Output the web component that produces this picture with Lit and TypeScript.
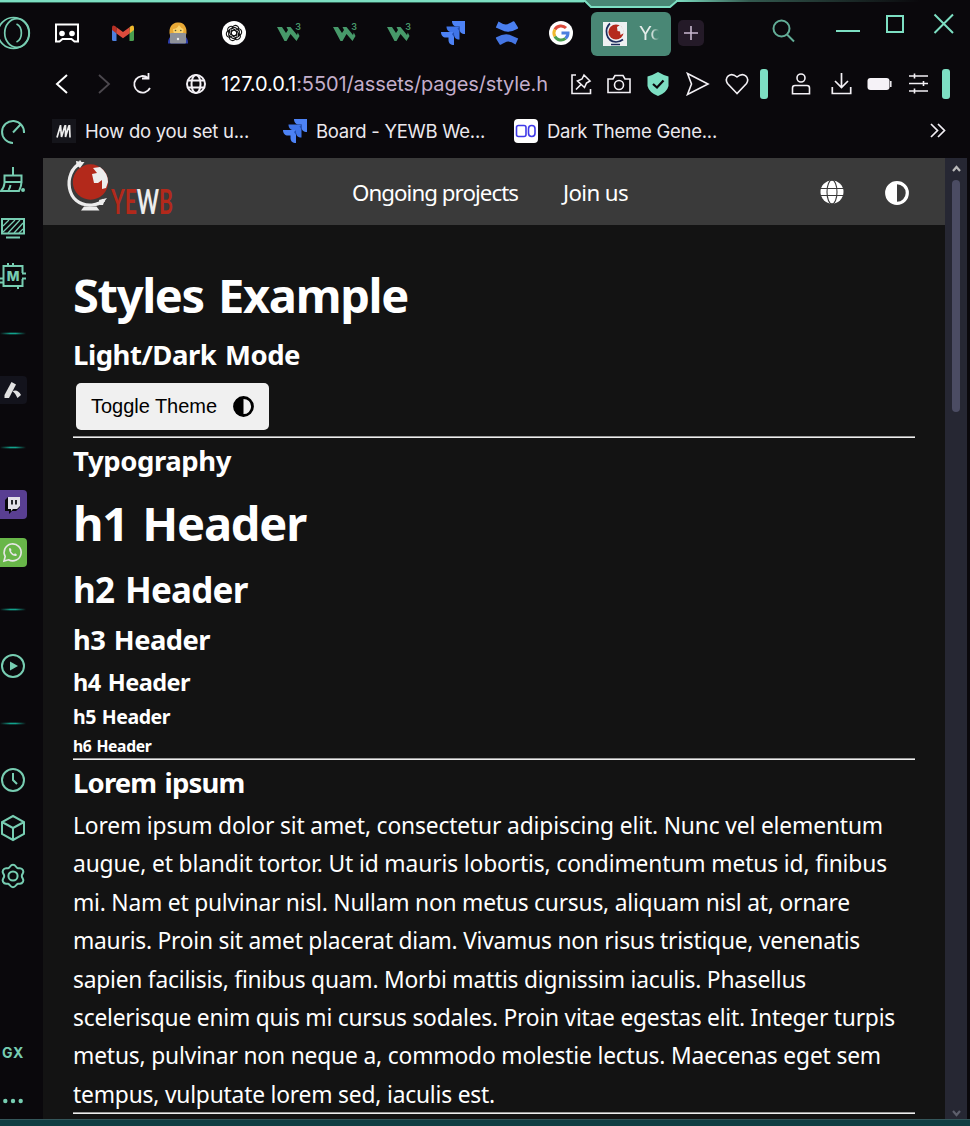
import { LitElement, html, svg, css } from "lit";
import { customElement, property } from "lit/decorators.js";

/* A single line of text whose tracking is adjusted to fill a set measure. */
@customElement("fit-line")
class FitLine extends LitElement {
  @property({ type: Number }) measure = 0;
  static styles = css`
    :host { display: block; white-space: pre; }
    .t { display: inline-block; }
  `;
  async firstUpdated() {
    this.fit();
    await document.fonts.ready;
    this.fit();
  }
  fit() {
    const t = this.renderRoot.querySelector(".t") as HTMLElement;
    t.style.letterSpacing = "0px";
    const n = (this.textContent || "").length;
    if (n && this.measure) {
      t.style.letterSpacing = (this.measure - t.getBoundingClientRect().width) / n + "px";
    }
  }
  render() {
    return html`<span class="t"><slot></slot></span>`;
  }
}

const jira = svg`
  <path d="M11 0H24V13C20.5 13 18.5 11 18.5 8V5.5H16C13 5.5 11 3.500 11 0Z" fill="#4d82f5"/>
  <path d="M5.500 5.500H18.500V18.500C15 18.500 13 16.500 13 13.500V11H10.500C7.500 11 5.500 9 5.500 5.500Z" fill="#3f74e8"/>
  <path d="M0 11H13V24C9.500 24 7.500 22 7.500 19V16.500H5C2 16.500 0 14.500 0 11Z" fill="#4d82f5"/>
  <path d="M13 11v5l-2-3zM18.500 5.500v5l-2-3z" fill="#2450b4"/>`;

const w3 = svg`
  <path d="M0 6H5L9 12L11 9L9.500 6H13.500L20 14L20.800 11.500L22.500 15L19.500 20L13.500 13L9.500 20H7.500Z" fill="#47996a"/>
  <text x="18.300" y="9" font-size="9" font-weight="600" font-family="Inter, sans-serif" fill="#47996a">3</text>`;

const half = (c: string) => svg`
  <circle cx="12" cy="12" r="10.300" fill="none" stroke=${c} stroke-width="3.200"/>
  <path d="M12 1A11 11 0 0 0 12 23Z" fill=${c}/>`;

const I = (w: number, h: number, body: unknown, vb = `0 0 ${w} ${h}`) =>
  html`<svg width=${w} height=${h} viewBox=${vb} fill="none">${body}</svg>`;

const tabs = [
  I(26, 22, svg`<path d="M2 2.500H24V19.500H20.500L17.500 17H8.500L5.500 19.500H2Z" stroke="#fff" stroke-width="2"/><circle cx="8" cy="11.500" r="2.800" fill="#fff"/><circle cx="18" cy="11.500" r="2.800" fill="#fff"/>`),
  I(24, 24, svg`<path d="M1 6.500L5.500 9.500V20H2.500Q1 20 1 18.500Z" fill="#4d80e0"/><path d="M23 6.500L18.500 9.500V20H21.500Q23 20 23 18.500Z" fill="#4a9e50"/><path d="M18.500 6.200L20 5Q23 3.600 23 7V9L18.500 12.400Z" fill="#efb92e"/><path d="M5.500 6.200L4 5Q1 3.600 1 7V9L5.500 12.400Z" fill="#b83025"/><path d="M5.500 6.200L12 11L18.500 6.200V12.400L12 17.200L5.500 12.400Z" fill="#dc4b3c"/>`),
  I(22, 24, svg`<path d="M1 22.500Q1 16 5 15H17Q21 16 21 22.500Z" fill="#2e3fae"/><path d="M3 14Q1.500 9 4 5Q7 1 11 1.500Q16 1 18 5Q20.500 9 19 14Q17 15 11 15Q5 15 3 14Z" fill="#e9a936"/><path d="M6 8Q10 8 12 4Q14 7.500 16.500 8Q17 14 11 14.500Q6 14 6 8Z" fill="#fbd36c"/><circle cx="8.500" cy="9.500" r=".8" fill="#553"/><circle cx="13.800" cy="9.500" r=".8" fill="#553"/><rect x="3" y="12" width="16" height="10.500" rx="1" fill="#8e9199"/><circle cx="11" cy="18" r="1.200" fill="#eee"/>`),
  I(24, 24, svg`<circle cx="12" cy="12" r="12" fill="#fff"/><g stroke="#111" stroke-width="1.100">${[0, 60, 120, 180, 240, 300].map((a) => svg`<path transform="rotate(${a} 12 12)" d="M12 8.900L14.800 10.500V15.200M10 6.500Q12.500 2.900 15.800 5.400Q17 6.500 16.700 8.600L12.800 6.300L9.200 8.300"/>`)}</g>`),
  I(24, 24, w3), I(24, 24, w3), I(24, 24, w3),
  I(24, 24, jira),
  I(24, 24, svg`<path d="M3.500 0.500Q10 5 14 2.500Q17 1 18.200 0.300Q19 0 19.500 .8L23 6.500Q23.400 7.300 22.600 7.700Q15 12 9.500 10.300L.8 6.600Z" fill="#4a7ff0"/><path d="M20.500 23.500Q14 19 10 21.500Q7 23 5.800 23.700Q5 24 4.500 23.200L1 17.500Q.6 16.700 1.400 16.300Q9 12 14.500 13.700L23.200 17.400Z" fill="#4576e4"/>`),
  I(24, 24, svg`<circle cx="12" cy="12" r="12" fill="#fff"/><g stroke-width="3"><path d="M17 7A7 7 0 0 0 5.900 8.500" stroke="#dc4b3c"/><path d="M5.900 8.500A7 7 0 0 0 5.900 15.500" stroke="#efb92e"/><path d="M5.900 15.500A7 7 0 0 0 16.500 17.400" stroke="#4a9e50"/><path d="M16.500 17.400A7 7 0 0 0 19 12H12.500" stroke="#4d80e0"/></g>`),
];

const globeLine = svg`<g stroke="#f3f0f5" stroke-width="2"><circle cx="11" cy="11" r="9"/><ellipse cx="11" cy="11" rx="4.500" ry="9"/><path d="M3 7.500H19M3 14.500H19"/></g>`;
const P = (d: string, w = 24, h = 24, sw = 1.8, c = "#f3f0f5") => I(w, h, svg`<path d=${d} stroke=${c} stroke-width=${sw}/>`);

const G = "#77cdb2";
const S = (body: unknown) => I(26, 28, svg`<g stroke=${G} stroke-width="2">${body}</g>`);

const side = {
  speed: S(svg`<path d="M13 25A11 11 0 1 1 24 15M13 14.500L20.500 6.500"/>`),
  broom: S(svg`<path d="M13 1V9M4.500 16V9.500H21.500V16M3.500 16H22.500M4.500 17Q4 22 1 25H19Q21.500 20 21.500 16M8.500 24Q10 22 10.500 19"/><circle cx="23" cy="24" r="1" fill=${G}/>`),
  screen: S(svg`<rect x="2" y="5" width="22" height="14.500"/><path d="M6 23.500H20"/><path d="M3 12L9 6M3 18L15 6M8 19L20 6M14 19L23 9M19 19L23 15" stroke-width="1.300"/>`),
  chip: S(svg`<path d="M8 1V4M13 1V4M0 16.500H3M0 20.500H3M18 24V27"/><path d="M22.500 11V4H3.500V24H22.500V17M22 11.500H26M22 16.500H26"/><text x="13" y="19" text-anchor="middle" font-family="Inter, sans-serif" font-size="13.500" font-weight="800" fill=${G} stroke="none">M</text>`),
  play: S(svg`<circle cx="13" cy="14" r="11"/><path d="M10 9.500V18.500L18 14Z" fill=${G} stroke="none"/>`),
  clock: S(svg`<circle cx="13" cy="14" r="11"/><path d="M13 7V14L17 18"/>`),
  cube: S(svg`<path d="M13 2L24 8V20L13 26L2 20V8ZM2 8L13 14L24 8M13 14V26"/>`),
  gear: S(svg`<circle cx="13" cy="14" r="4.600"/><path d="M13 2.800C16 2.800 15.500 5.500 18 6.300C20.300 6.300 21.500 5.300 23 8.200C24.500 11 21.800 11.500 21.800 14C21.800 16.500 24.500 17 23 19.800C21.500 22.700 20.300 21.700 18 21.700C15.500 22.500 16 25.200 13 25.200C10 25.200 10.500 22.500 8 21.700C5.700 21.700 4.500 22.700 3 19.800C1.500 17 4.200 16.500 4.200 14C4.200 11.500 1.500 11 3 8.200C4.500 5.300 5.700 6.300 8 6.300C10.500 5.500 10 2.800 13 2.800Z"/>`),
  dots: I(26, 28, svg`<g fill=${G}><circle cx="5.300" cy="15" r="2.200"/><circle cx="13" cy="15" r="2.200"/><circle cx="20.700" cy="15" r="2.200"/></g>`),
};

const lines: [string, number][] = [
  ["Lorem ipsum dolor sit amet, consectetur adipiscing elit. Nunc vel elementum", 810],
  ["augue, et blandit tortor. Ut id mauris lobortis, condimentum metus id, finibus", 814],
  ["mi. Nam et pulvinar nisl. Nullam non metus cursus, aliquam nisl at, ornare", 777],
  ["mauris. Proin sit amet placerat diam. Vivamus non risus tristique, venenatis", 787],
  ["sapien facilisis, finibus quam. Morbi mattis dignissim iaculis. Phasellus", 733],
  ["scelerisque enim quis mi cursus sodales. Proin vitae egestas elit. Integer turpis", 822],
  ["metus, pulvinar non neque a, commodo molestie lectus. Maecenas eget sem", 808],
  ["tempus, vulputate lorem sed, iaculis est.", 422],
];

@customElement("app-root")
class AppRoot extends LitElement {
  static styles = css`
    :host { display: block; }
    * { box-sizing: border-box; margin: 0; }
    svg { display: block; flex: none; }
    .win { width: 970px; height: 1126px; overflow: hidden; background: #0a080c; display: grid;
      grid-template: 1119px 7px / 43px 927px; font-family: Inter, sans-serif; position: relative; }
    .edge { position: absolute; left: 0; top: 0; }
    .bottom { grid-column: 1 / 3; background: #103d42; border-top: 1px solid #34565a; }
    .side { display: flex; flex-direction: column; width: 26px; overflow: visible; }
    .opera { height: 108px; padding-top: 16px; }
    .cell { height: 48px; display: flex; align-items: center; justify-content: center; flex: none; }
    .sep { height: 66px; padding-top: 32px; flex: none; }
    .sep i { display: block; width: 26px; height: 3px; background: linear-gradient(90deg, #0a080c, transparent 40%, transparent 60%, #0a080c), linear-gradient(#0a080c, #12a18c 50%, #0a080c); }
    .grow { flex: 1; }
    .gx { color: #77cdb2; font: 700 14px/48px Inter, sans-serif; letter-spacing: .8px; padding-top: 1px; }
    .last { height: 43px; align-items: flex-start; padding-top: 10px; }
    .main { display: flex; flex-direction: column; }
    .tabs { height: 66px; display: grid; align-items: center; flex: none; margin-left: -4px;
      grid-template-columns: 56px 56px 54px 58px 52px 59px 50px 58px 50px 58px 1px 80px 7px 26px 64px 30px 38px 24px 26px 18px 29px 22px; }
    .tabs > *, .tools > * { justify-self: center; }
    .tab { width: 80px; height: 44px; margin-top: 1px; border-radius: 6px; background: #498775; display: flex; align-items: center; padding-left: 12px; color: #e6eeeb; font-size: 19px; }
    .tab span { margin-left: 12px; width: 20px; overflow: hidden; -webkit-mask-image: linear-gradient(90deg, #000 60%, transparent); }
    .plus { width: 26px; height: 26px; border-radius: 5px; background: #241a28; }
    .find { margin-top: -4px; }
    .wb { margin-top: -19px; }
    .tools { height: 42px; margin-top: -3px; display: grid; align-items: center; flex: none;
      grid-template-columns: 37px 48px 28px 15px 50px 326px 15px 38px 38px 40px 40px 38px 16px 10px 38px 42px 34px 44px 12px; }
    .tools > svg, .tools > .bar { margin-top: -1px; }
    .url { width: 326px; overflow: hidden; font-size: 20px; line-height: 28px; color: #c4aecb; justify-self: start; }
    .url b { color: #fff; font-weight: 400; }
    .bar { width: 8px; height: 30px; border-radius: 3px; background: #7ddfc3; }
    .marks { height: 53px; display: flex; align-items: center; padding: 0 0 2px 9px; color: #ece9ee; font-size: 18.500px; flex: none; }
    .marks fit-line { margin-left: 9px; width: 164px; }
    .m2 { margin-left: 34px; } .m3 { margin-left: 29px; }
    .marks .w2 { width: 169px; } .marks .w3 { width: 170px; }
    .more { margin-left: 213px; }
    .body { display: grid; grid-template-columns: 902px 22px; height: 961px; }
    .page { background: #131313; color: #fff; font-family: "Noto Sans", "Open Sans", sans-serif; overflow: hidden; }
    .nav { height: 67px; background: #3a3a3a; display: flex; align-items: center; font-size: 22.300px; }
    .logo { margin-left: 23px; width: 112px; overflow: visible; }
    .ongoing { width: 166px; margin-left: 174px; margin-top: 1px; }
    .join { width: 65px; margin-left: 45px; margin-top: 1px; }
    .g { margin-left: 192px; } .h { margin-left: 41px; margin-top: 2px; }
    .content { padding: 35px 30px 0; }
    h1, h2, h3, h4, h5, h6 { font-weight: 700; white-space: nowrap; word-spacing: .07em; }
    .t1 { font-size: 47px; line-height: 70px; }
    .t3 { font-size: 27.500px; line-height: 50px; height: 48px; }
    .s3 { font-size: 27.500px; line-height: 46px; height: 45px; }
    .e1 { font-size: 47px; line-height: 80px; }
    .e2 { font-size: 35px; line-height: 53px; }
    .e3 { font-size: 27.300px; line-height: 47px; }
    .e4 { font-size: 23.500px; line-height: 38px; }
    .e5 { font-size: 19.500px; line-height: 31px; }
    .e6 { font-size: 15.700px; line-height: 29px; height: 26px; }
    .btn { margin: 5px 0 6px 3px; width: 193px; height: 47px; border: 0; border-radius: 5px; background: #f0f0f0; color: #000;
      display: flex; align-items: center; padding: 0 0 0 15px; font: 20px "Liberation Sans", sans-serif; text-align: left; }
    .btn fit-line { width: 126px; margin-right: 16px; }
    .btn svg { margin-top: -1px; }
    .rule { height: 2px; border: 0; border-top: 1px solid #9a9a9a; background: #eee; position: relative; }
    .para { font-size: 22.800px; line-height: 38.400px; padding-top: 2px; height: 307px; }
    .scroll { background: #262733; display: flex; flex-direction: column; align-items: center; padding: 7px 0 2px; }
    .thumb { width: 8px; height: 232px; border-radius: 4px; background: #4b4c63; margin: 7px 0 auto; }
  `;

  render() {
    return html`<div class="win">
      <svg class="edge" width="970" height="10" viewBox="0 0 970 10">
        <defs><linearGradient id="f" x1="676" x2="920" gradientUnits="userSpaceOnUse"><stop offset="0" stop-color="#7ddfc3"/><stop offset=".3" stop-color="#33594f"/><stop offset="1" stop-color="#0a080c"/></linearGradient></defs>
        <path d="M584 0H678L670 7H591Z" fill="#498775"/>
        <path d="M0 1H585L591 7H670L677 1" fill="none" stroke="#7ddfc3" stroke-width="2"/>
        <path d="M0 2.500H584" stroke="#356657" stroke-width="1"/>
        <rect x="676" width="294" height="2" fill="url(#f)"/>
      </svg>
      <div class="side">
        <div class="opera">${I(32, 34, svg`<g stroke="#77cdb2" stroke-width="1.700"><circle cx="13.500" cy="17" r="15.500"/><ellipse cx="17" cy="17" rx="12.300" ry="14.300"/><path d="M16.500 8C23 11 23 23 16.500 26"/></g>`)}</div>
        <div class="cell">${side.speed}</div><div class="cell">${side.broom}</div><div class="cell">${side.screen}</div><div class="cell">${side.chip}</div>
        <div class="sep"><i></i></div>
        <div class="cell">${I(28, 28, svg`<rect x="-2" width="30" height="28" rx="4" fill="#13131c"/><path d="M12.500 6L17 8.500L10 22H5.500V19Z" fill="#e2e2e2"/><path d="M13.500 15Q19 13 22 19L18.500 22Q17 18 13.500 15Z" fill="#e2e2e2"/>`)}</div>
        <div class="sep"><i></i></div>
        <div class="cell">${I(28, 29, svg`<rect x="-3" width="31" height="29" rx="4" fill="#593f92"/><path d="M9 7L6 10V21H10V24L13 21H17L21 17V7Z" fill="#08080c"/><path d="M9 7H21V16L18 19H14L12 21V19H9Z" fill="#e2e0e8"/><path d="M13 10V14.500M17 10V14.500" stroke="#08080c" stroke-width="1.700"/>`)}</div>
        <div class="cell">${I(28, 29, svg`<rect x="-3" width="31" height="29" rx="4" fill="#68b649"/><path d="M5 23L6.200 18.500A8.500 8.500 0 1 1 9.500 21.800Z" stroke="#e6e6e6" stroke-width="1.600"/><path d="M10 10.500Q11.500 9 12.500 12Q12 13 12 13.300Q13 15.500 15 16.200L16 15.300Q18.500 16.200 17.700 17.500C16 19.200 10 16.500 10 10.500Z" fill="#e6e6e6"/>`)}</div>
        <div class="sep"><i></i></div>
        <div class="cell">${side.play}</div>
        <div class="sep"><i></i></div>
        <div class="cell">${side.clock}</div><div class="cell">${side.cube}</div><div class="cell">${side.gear}</div>
        <div class="grow"></div>
        <div class="cell gx">GX</div>
        <div class="cell last">${side.dots}</div>
      </div>
      <div class="main">
        <div class="tabs">
          ${tabs}<i></i>
          <div class="tab">${I(24, 24, svg`<rect width="24" height="24" fill="#eef1f2"/><circle cx="13" cy="10" r="7.600" fill="#b52a1c"/><path d="M14 5L17 3L20.500 7L21 11L17.500 13L17 9.500L14.500 9Z" fill="#eef1f2"/><path d="M7 1.500C1 7 2.500 19 13 20C16 20 18 19 20 17.500M8 22.500H17" stroke="#1d2d5e" stroke-width="1.700"/>`)}<span>Yo</span></div>
          <i></i>
          <div class="plus">${P("M13 6V20M6 13H20", 26, 26, 1.6, "#c9b8cf")}</div>
          <i></i>
          <div class="find">${I(24, 24, svg`<g stroke="#62ad97" stroke-width="2"><circle cx="10.500" cy="9.500" r="8"/><path d="M16 15.500L23 22.500"/></g>`)}</div>
          <i></i>
          <div class="wb">${P("M0 17H24", 24, 20, 2, "#7ddfc3")}</div>
          <i></i>
          <div class="wb">${P("M1 1H17V17H1Z", 18, 18, 2, "#7ddfc3")}</div>
          <i></i>
          <div class="wb">${P("M1.500 1.500L20 20M20 1.500L1.500 20", 22, 21, 2, "#7ddfc3")}</div>
        </div>
        <div class="tools">
          ${P("M12 1L2 10L12 19", 14, 20, 2, "#fff")}
          ${P("M2 1L12 10L2 19", 14, 20, 1.8, "#4c484e")}
          ${P("M18 15A8.300 8.300 0 1 1 16 5M10 5.500H16.500V0", 20, 22)}
          <i></i>
          ${I(22, 22, globeLine)}
          <fit-line class="url" .measure=${327}><b>127.0.0.1</b>:5501/assets/pages/style.h</fit-line>
          <i></i>
          ${P("M6 2H2V20.500H20.500V16M14 2L20 8L16.500 10L14.500 14.500L7.500 8L12 6ZM11 11.500L6 16.500", 22, 22, 1.6)}
          ${I(24, 20, svg`<path d="M1 18.500V5H6L8 1.500H16L18 5H23V18.500Z" stroke="#f3f0f5" stroke-width="1.600"/><circle cx="12" cy="11" r="4.500" stroke="#f3f0f5" stroke-width="1.600"/>`)}
          ${I(24, 24, svg`<path d="M12 0Q17 3 22.500 4.500V14Q21 20.500 12 24Q3 20.500 1.500 14V4.500Q7 3 12 0Z" fill="#7ddfc3"/><path d="M7 12L11 15.500L17.500 8.500" stroke="#0a080c" stroke-width="2.200"/>`)}
          ${P("M1.500 1.500L22 12L1.500 22.500L5.500 12Z", 24, 24, 1.6)}
          ${P("M12 21.500L2.500 11.500C-1 6 5 -1 12 5C19 -1 25 6 21.500 11.500Z", 24, 24, 1.6)}
          <div class="bar"></div><i></i>
          ${I(20, 22, svg`<circle cx="10" cy="5" r="4" stroke="#f3f0f5" stroke-width="1.600"/><path d="M1.500 20.800V15Q1.500 12.500 4 12.500H16Q18.500 12.500 18.500 15V20.800Z" stroke="#f3f0f5" stroke-width="1.600"/>`)}
          ${P("M10.500 0V14M4 8L10.500 14.500L17 8M1.300 14V20.500H19.700V14", 21, 22, 1.7)}
          ${I(25, 14, svg`<rect x=".5" y="1" width="22" height="12" rx="3" fill="#f5f2f7"/><path d="M23.800 4V10" stroke="#f5f2f7" stroke-width="1.500"/>`)}
          ${P("M0 3H19M0 10.500H19M0 18H19M5.500 0.500V5.500M14.500 8V13M5.500 15.500V20.500", 19, 21, 1.6)}
          <div class="bar"></div>
        </div>
        <div class="marks">
          ${I(24, 24, svg`<rect width="24" height="24" fill="#15151b"/><path d="M5 18.500L8.500 6.500M8.500 6L9.500 18L13 6.500M13.500 6V18L17 6.500M17.500 6L18 18.500" stroke="#eee" stroke-width="1.700"/>`)}
          <fit-line .measure=${164}>How do you set u...</fit-line>
          <div class="m2">${I(24, 24, jira)}</div><fit-line class="w2" .measure=${169}>Board - YEWB We...</fit-line>
          <div class="m3">${I(24, 24, svg`<rect width="24" height="24" rx="4" fill="#fff"/><rect x="2.500" y="6.500" width="9.500" height="11" rx="2" stroke="#3f39e8" stroke-width="1.600"/><rect x="14.500" y="6.500" width="6.500" height="11" rx="3.200" stroke="#3f39e8" stroke-width="1.600"/>`)}</div><fit-line class="w3" .measure=${170}>Dark Theme Gene...</fit-line>
          <div class="more">${P("M1 1L7.500 7.500L1 14M8 1L14.500 7.500L8 14", 16, 15, 1.7)}</div>
        </div>
        <div class="body">
          <div class="page">
            <div class="nav">
              <svg class="logo" width="112" height="67" viewBox="65 158 112 67">
                <circle cx="89.500" cy="182" r="17.700" fill="#b3291b"/>
                <path d="M91 174L96 173L92 168L99 167Q107 173 107 182L105 188L101 189V180L97 183H93Z" fill="#ededed"/>
                <path d="M79 163.500C62 172 64 207 91 205C96 204.500 100 203 103 200" fill="none" stroke="#ededed" stroke-width="3.200"/>
                <path d="M75 161L78 161.500L79 160L80.500 162H83.500L79 168L75.500 165ZM98 200L106 198L103 202L102 205L99 205ZM83 206.500H95.500L98.500 210.500H80Z" fill="#ededed"/>
                <text x="110" y="213.500" textLength="62" lengthAdjust="spacingAndGlyphs" font-family="Lato, sans-serif" font-weight="700" font-size="34" fill="#b3291b">YE<tspan fill="#ededed">W</tspan>B</text>
              </svg>
              <fit-line class="ongoing" .measure=${166}>Ongoing projects</fit-line>
              <fit-line class="join" .measure=${65}>Join us</fit-line>
              <div class="g">${I(24, 24, svg`<circle cx="12" cy="12" r="11.500" fill="#fff"/><g stroke="#3a3a3a" stroke-width="1.100"><ellipse cx="12" cy="12" rx="5" ry="12"/><path d="M0 8.500H24M0 15.500H24"/></g>`)}</div>
              <div class="h">${I(24, 24, half("#fff"))}</div>
            </div>
            <div class="content">
              <h1 class="t1"><fit-line .measure=${335}>Styles Example</fit-line></h1>
              <h3 class="t3"><fit-line .measure=${227}>Light/Dark Mode</fit-line></h3>
              <button class="btn"><fit-line .measure=${126}>Toggle Theme</fit-line>${I(21, 21, half("#000"), "0 0 24 24")}</button>
              <hr class="rule">
              <h3 class="s3"><fit-line .measure=${158}>Typography</fit-line></h3>
              <h1 class="e1"><fit-line .measure=${233}>h1 Header</fit-line></h1>
              <h2 class="e2"><fit-line .measure=${174.5}>h2 Header</fit-line></h2>
              <h3 class="e3"><fit-line .measure=${137}>h3 Header</fit-line></h3>
              <h4 class="e4"><fit-line .measure=${117}>h4 Header</fit-line></h4>
              <h5 class="e5"><fit-line .measure=${97}>h5 Header</fit-line></h5>
              <h6 class="e6"><fit-line .measure=${78.5}>h6 Header</fit-line></h6>
              <hr class="rule">
              <h3 class="s3"><fit-line .measure=${171.5}>Lorem ipsum</fit-line></h3>
              <div class="para">${lines.map(([t, w]) => html`<fit-line .measure=${w}>${t}</fit-line>`)}</div>
              <hr class="rule">
            </div>
          </div>
          <div class="scroll">
            ${P("M1 6L4.500 2L8 6", 9, 8, 2.2, "#b9b9b9")}
            <div class="thumb"></div>
            ${P("M1 2L4.500 6L8 2", 9, 8, 2.2, "#5d5f6c")}
          </div>
        </div>
      </div>
      <div class="bottom"></div>
    </div>`;
  }
}
